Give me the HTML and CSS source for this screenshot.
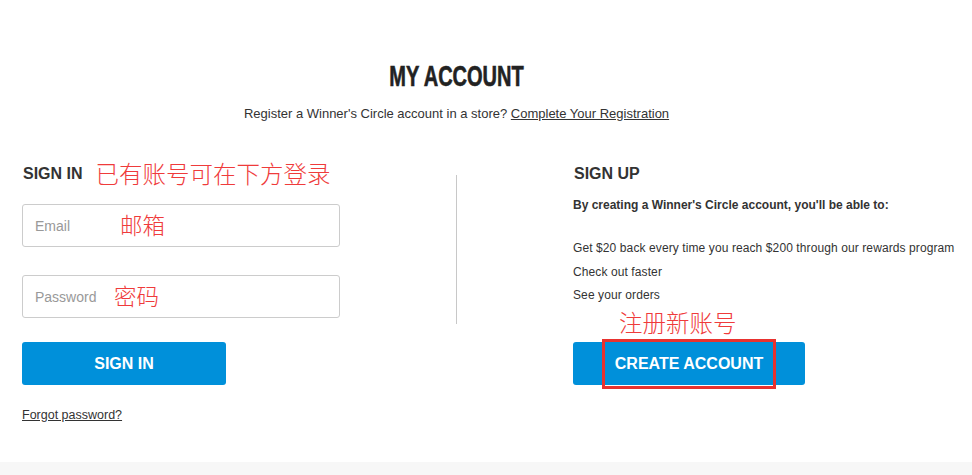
FILE: index.html
```html
<!DOCTYPE html>
<html lang="en">
<head>
  <meta charset="UTF-8">
  <meta name="viewport" content="width=device-width, initial-scale=1.0">
  <title>My Account</title>
  <link rel="stylesheet" href="styles.css">
</head>
<body>
  <main class="account">
    <header class="account-head">
      <h1 class="title"><span>MY ACCOUNT</span></h1>
      <p class="intro">Register a Winner's Circle account in a store? <a href="#">Complete Your Registration</a></p>
    </header>

    <div class="columns">
      <section class="signin">
        <div class="col-head">
          <h2>SIGN IN</h2>
          <span class="note">已有账号可在下方登录</span>
        </div>
        <div class="field">
          <input type="text" placeholder="Email">
          <span class="note note-email">邮箱</span>
        </div>
        <div class="field field-password">
          <input type="password" placeholder="Password">
          <span class="note note-password">密码</span>
        </div>
        <button class="btn btn-signin">SIGN IN</button>
        <a href="#" class="forgot">Forgot password?</a>
      </section>

      <div class="divider"></div>

      <section class="signup">
        <div class="col-head">
          <h2>SIGN UP</h2>
        </div>
        <p class="lead">By creating a Winner's Circle account, you'll be able to:</p>
        <ul class="perks">
          <li>Get $20 back every time you reach $200 through our rewards program</li>
          <li>Check out faster</li>
          <li>See your orders</li>
        </ul>
        <p class="note note-signup">注册新账号</p>
        <button class="btn btn-create"><span class="marked">CREATE ACCOUNT</span></button>
      </section>
    </div>
  </main>
  <footer class="footer-strip"></footer>
</body>
</html>
```

FILE: styles.css
```css
/* General Reset */
* {
  margin: 0;
  padding: 0;
  box-sizing: border-box;
}

body {
  font-family: 'Liberation Sans', Arial, sans-serif;
  background: #fff;
  color: #333;
}

.account {
  padding-top: 58px;
  padding-bottom: 39px;
}

.account-head {
  width: 913px;
  text-align: center;
}

.title {
  font-family: 'Liberation Sans', Arial, sans-serif;
  font-size: 29px;
  line-height: 36px;
  font-weight: 700;
  color: #222;
}

/* no condensed face installed, so squeeze the bold one */
.title span {
  display: inline-block;
  transform: scaleX(0.69);
  -webkit-text-stroke: 0.6px #222;
}

.intro {
  margin-top: 12px;
  font-size: 13px;
  line-height: 16px;
}

.intro a,
.forgot {
  color: #333;
  text-decoration: underline;
}

.columns {
  display: grid;
  grid-template-columns: 434px 1px 1fr;
  margin-top: 39px;
  padding-left: 22px;
}

.col-head {
  display: flex;
  align-items: center;
  height: 24px;
}

.col-head h2 {
  font-size: 16px;
  font-weight: 700;
  line-height: 20px;
  color: #333;
  padding-left: 1px;
  padding-top: 1px;
}

/* red annotations */
.note {
  font-family: 'Noto Sans CJK SC', sans-serif;
  font-size: 23.5px;
  line-height: 28px;
  font-weight: 300;
  color: #ef3b3b;
}

.col-head .note {
  margin-left: 13px;
}

.field {
  position: relative;
  width: 318px;
  margin-top: 19px;
}

.field-password {
  margin-top: 28px;
}

.field input {
  display: block;
  width: 100%;
  height: 43px;
  padding: 0 12px;
  border: 1px solid #ccc;
  border-radius: 3px;
  font-family: inherit;
  font-size: 14px;
  color: #333;
  outline: none;
}

.field input::placeholder {
  color: #999;
}

.note-email,
.note-password {
  position: absolute;
  top: 6px;
  pointer-events: none;
  font-size: 22.5px;
}

.note-email {
  left: 98px;
}

.note-password {
  left: 92px;
}

.btn {
  display: flex;
  justify-content: center;
  align-items: center;
  height: 43px;
  border: none;
  border-radius: 3px;
  background: #0090da;
  color: #fff;
  font-family: inherit;
  font-size: 16px;
  font-weight: 700;
  cursor: pointer;
}

.btn-signin {
  width: 204px;
  margin-top: 24px;
}

.forgot {
  display: inline-block;
  margin-top: 22px;
  font-size: 12.5px;
  line-height: 16px;
}

.divider {
  width: 1px;
  height: 149px;
  margin-top: 14px;
  background: #c8c8c8;
}

.signup {
  padding-left: 116px;
}

.lead {
  margin-top: 12px;
  font-size: 12px;
  line-height: 16px;
  font-weight: 700;
}

.perks {
  list-style: none;
  margin-top: 24px;
  font-size: 12px;
  line-height: 23.5px;
}

.perks li {
  letter-spacing: 0.1px;
}

.note-signup {
  padding-left: 46px;
}

.btn-create {
  width: 232px;
  margin-top: 6px;
  align-items: flex-start;
}

.marked {
  display: inline-block;
  padding: 0 10px;
  line-height: 44px;
  outline: 3px solid #e8322f;
}

.footer-strip {
  height: 13px;
  background: #f7f7f7;
}
```
